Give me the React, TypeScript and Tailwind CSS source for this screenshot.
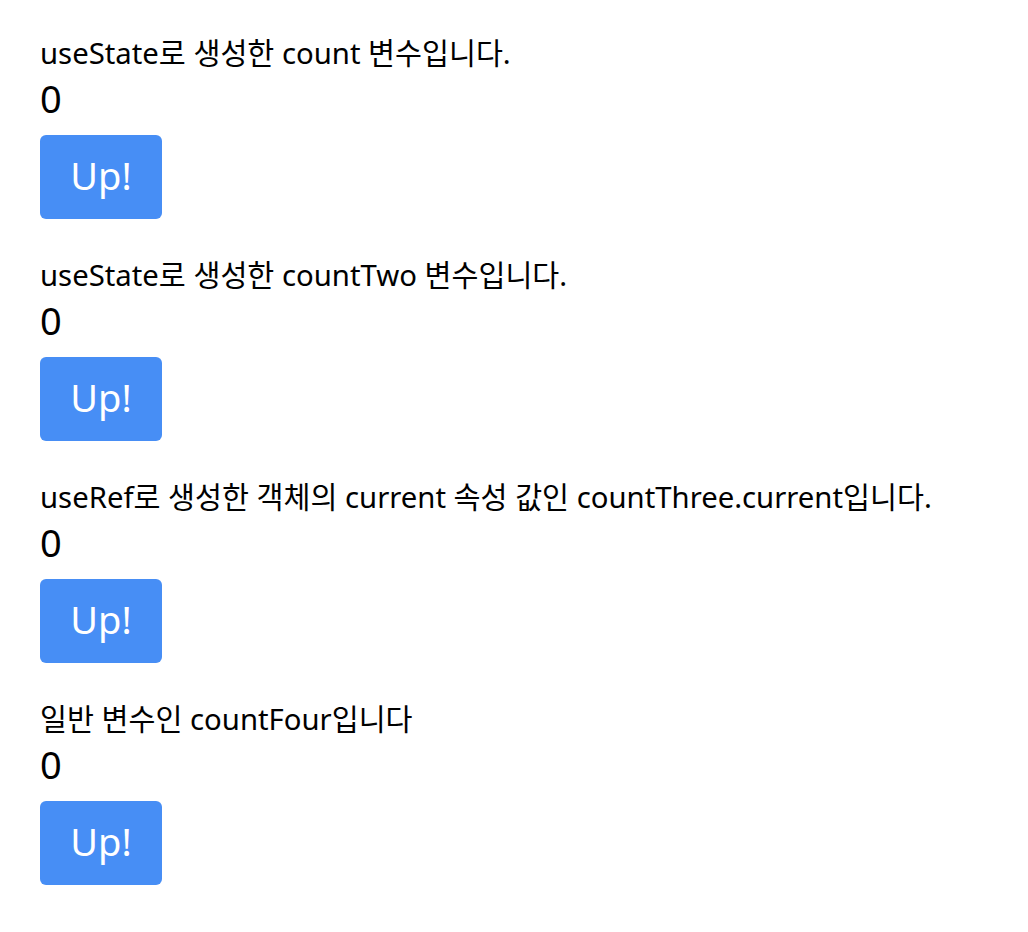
import { useRef, useState } from "react";

const font = { fontFamily: '"Noto Sans", "Noto Sans CJK KR", sans-serif' };

function Counter({ label, value, onUp }: { label: string; value: number; onUp: () => void }) {
  return (
    <div className="mb-[36px]">
      <p className="h-[41px] leading-[41px] text-[29.3px] text-black whitespace-nowrap">{label}</p>
      <p className="h-[48px] leading-[48px] text-[38px] text-black">{value}</p>
      <button
        onClick={onUp}
        className="mt-[13px] w-[122px] h-[84px] pb-[5px] flex items-center justify-center rounded-[6px] bg-[#478ef5] text-white text-[38px] leading-none"
      >
        Up!
      </button>
    </div>
  );
}

export default function App() {
  const [count, setCount] = useState(0);
  const [countTwo, setCountTwo] = useState(0);
  const countThree = useRef(0);
  let countFour = 0;

  return (
    <div className="min-h-screen bg-white pl-[40px] pt-[33px]" style={font}>
      <Counter label="useState로 생성한 count 변수입니다." value={count} onUp={() => setCount(count + 1)} />
      <Counter label="useState로 생성한 countTwo 변수입니다." value={countTwo} onUp={() => setCountTwo(countTwo + 1)} />
      <Counter
        label="useRef로 생성한 객체의 current 속성 값인 countThree.current입니다."
        value={countThree.current}
        onUp={() => {
          countThree.current += 1;
        }}
      />
      <Counter
        label="일반 변수인 countFour입니다"
        value={countFour}
        onUp={() => {
          countFour += 1;
        }}
      />
    </div>
  );
}
